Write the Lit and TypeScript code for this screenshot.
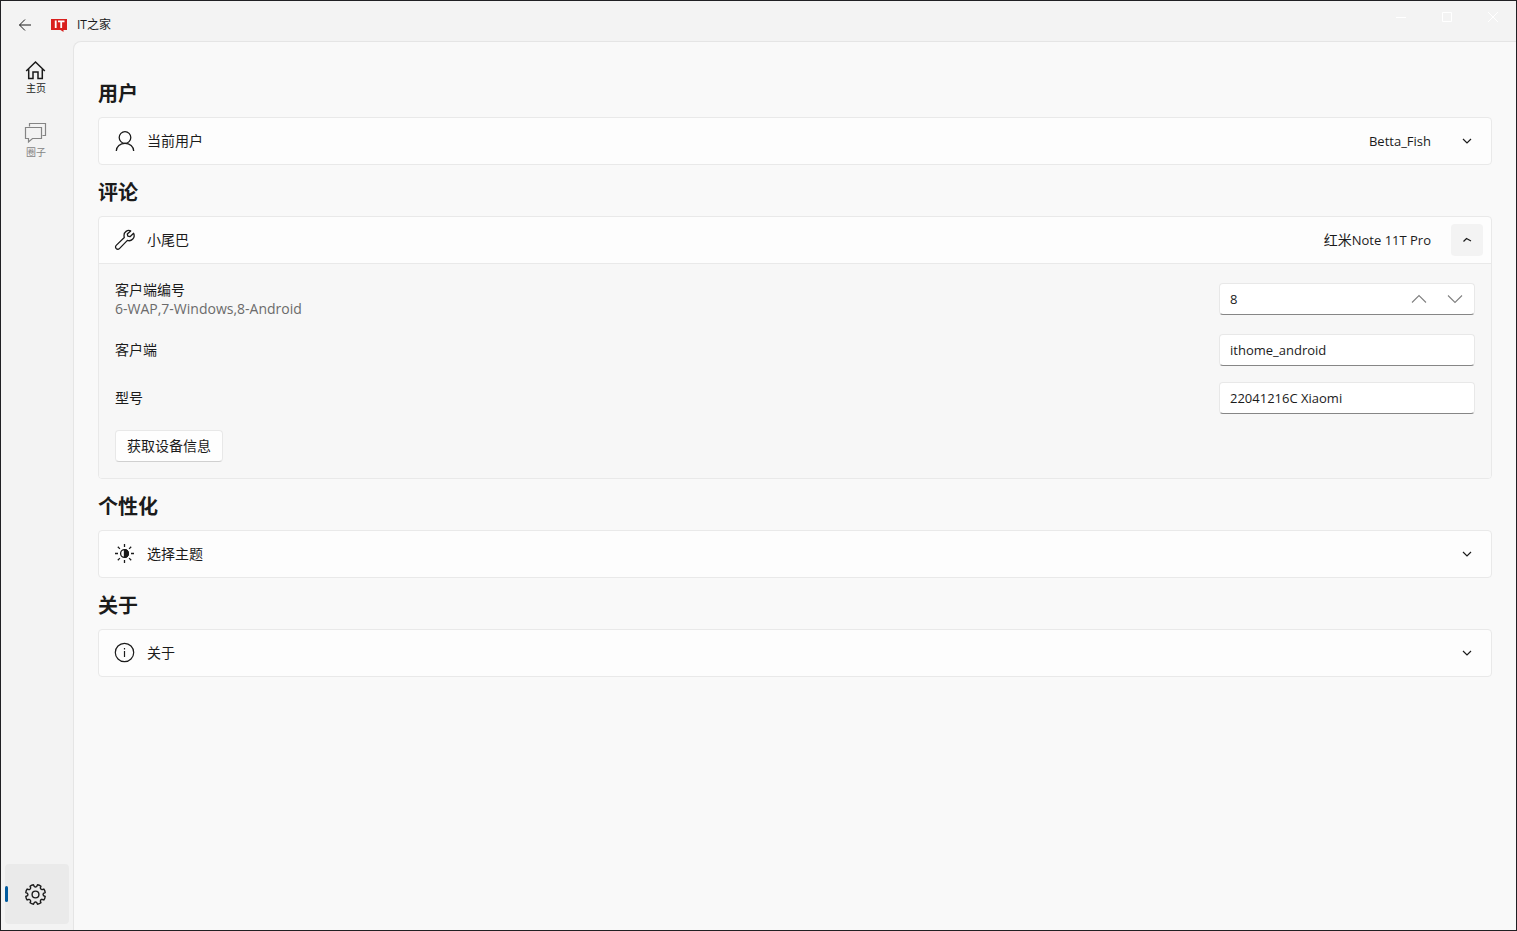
import { LitElement, html, css, svg, nothing, type TemplateResult } from "lit";
import { customElement, property } from "lit/decorators.js";

const icon = (size: number, body: TemplateResult, width = 1.2) => html`<svg
  width=${size}
  height=${size}
  viewBox="0 0 ${size} ${size}"
  fill="none"
  stroke="currentColor"
  stroke-width=${width}
  aria-hidden="true"
>
  ${body}
</svg>`;

const gearPath = (() => {
  const c = 11.5;
  const pts: string[] = [];
  for (let i = 0; i < 8; i++) {
    const a = (i * Math.PI) / 4 + Math.PI / 8;
    const at = (r: number, d: number) =>
      `${(c + r * Math.cos(a + d)).toFixed(2)} ${(c + 1 + r * Math.sin(a + d)).toFixed(2)}`;
    pts.push(`${i ? "L" : "M"}${at(8.1, -0.24)} L${at(9.9, -0.19)} Q${at(10.3, 0)} ${at(9.9, 0.19)} L${at(8.1, 0.24)}`);
    pts.push(`Q${at(7.1, 0.39)} ${at(8.1, 0.54)}`);
  }
  return pts.join(" ") + "Z";
})();

const icons = {
  back: icon(14, svg`<path d="M13 7H1.5M7 1.5 1.5 7 7 12.5" />`, 1),
  home: icon(22, svg`<path d="M1.200 12 10.500 3l9.300 9M3.700 10.200V19.500h4.300v-6.500h5v6.500h4.300V10.200" />`, 1.5),
  chat: icon(22, svg`<path d="M4.500 3.500V.500h16v12H17.500M.5 4.500h16v11H7.500L3.500 19v-3.500h-3z" />`, 1.2),
  gear: icon(24, svg`<path d=${gearPath} stroke-linejoin="round" /><circle cx="11.500" cy="12.500" r="3.400" />`, 1.4),
  user: icon(20, svg`<circle cx="10" cy="6.500" r="5.800" /><path d="M1.300 20a8.700 7.700 0 0 1 17.400 0" />`, 1.3),
  wrench: icon(20, svg`<path stroke-linejoin="round" d="M18.600 3.300 15 6.700l-2.200-.500-.500-2.200L15.700.900C12.500-.500 8.800 2 9 5.600c0 .700.100 1.300.300 1.900L1.200 15.400a2.200 2.200 0 0 0 3.200 3.200l8-8.200c4 1.400 8.300-2.600 6.200-7.100z" />`, 1.3),
  theme: icon(20, svg`<circle cx="9.500" cy="9.500" r="3.900" /><path d="M9.500 5.600a3.900 3.900 0 0 1 0 7.800z" fill="currentColor" /><path d="M9.500 0v3M9.500 16v3M0 9.500h3M16 9.500h3M2.800 2.800l2.100 2.100M14.100 14.100l2.100 2.100M2.800 16.200l2.100-2.100M14.100 4.900l2.100-2.100" />`, 1.3),
  info: icon(20, svg`<circle cx="9.500" cy="9.500" r="9.200" /><path d="M9.500 8v6M9.500 5v1.500" />`, 1.2),
  down: icon(10, svg`<path d="M1 3 5 7 9 3" />`, 1.2),
  up: icon(10, svg`<path d="M1.500 6.500 4.500 3.500 9 6" />`, 1.2),
  spinUp: icon(14, svg`<path d="M0 10.500 7 3.500 14 10.500" />`, 1.1),
  spinDown: icon(14, svg`<path d="M0 3.500 7 10.500 14 3.500" />`, 1.1),
  minimize: icon(10, svg`<path d="M0 5.500h10" />`, 1),
  maximize: icon(10, svg`<path d="M.5.500h9v9h-9z" />`, 1),
  close: icon(10, svg`<path d="M0 0l10 10M10 0 0 10" />`, 1),
  logo: html`<svg width="16" height="14" viewBox="0 0 16 14" aria-hidden="true">
    <path fill="#d9201e" d="M0 1h16v11h-3.500v2L9.500 12H0z" />
    <path stroke="#fff" stroke-width="1.800" d="M4.700 2.500v7.500M7 3.400h6.500M10.200 2.500v7.500" />
  </svg>`,
};

const shared = css`
  * {
    box-sizing: border-box;
  }
  button,
  input {
    font: inherit;
    color: inherit;
    margin: 0;
  }
  button {
    border: 0;
    padding: 0;
    background: none;
    display: flex;
    align-items: center;
    justify-content: center;
  }
  svg {
    display: block;
    flex: none;
    overflow: visible;
  }
`;

@customElement("setting-card")
export class SettingCard extends LitElement {
  @property() label = "";
  @property({ type: Boolean, reflect: true }) open = false;
  @property({ attribute: false }) glyph?: TemplateResult;

  static styles = [
    shared,
    css`
      :host {
        display: block;
        border: 1px solid #e9e9e9;
        border-radius: 4px;
        background: #fdfdfd;
        overflow: hidden;
      }
      .header {
        display: flex;
        align-items: center;
        height: 46px;
        padding: 0 8px 0 16px;
      }
      .label {
        flex: 1;
        margin-left: 12px;
        font-size: 14px;
      }
      .toggle {
        width: 32px;
        height: 32px;
        margin-left: 20px;
        border-radius: 4px;
      }
      :host([open]) .toggle {
        background: #f3f3f3;
      }
      .body {
        border-top: 1px solid #e9e9e9;
        background: #f7f7f7;
        padding: 8px 16px;
      }
    `,
  ];

  render() {
    return html`
      <div class="header">
        ${this.glyph}
        <span class="label">${this.label}</span>
        <slot name="value"></slot>
        <button
          class="toggle"
          aria-label=${this.label}
          aria-expanded=${this.open}
          @click=${() => (this.open = !this.open)}
        >
          ${this.open ? icons.up : icons.down}
        </button>
      </div>
      ${this.open ? html`<div class="body"><slot></slot></div>` : nothing}
    `;
  }
}

@customElement("app-root")
export class AppRoot extends LitElement {
  static styles = [
    shared,
    css`
      :host {
        display: flex;
        flex-direction: column;
        box-sizing: border-box;
        min-height: 100vh;
        border: 1px solid #202023;
        background: #f3f3f3;
        color: #1b1b1b;
        font-family: "Open Sans", "Noto Sans CJK SC", sans-serif;
        font-size: 14px;
        line-height: 20px;
      }
      .titlebar {
        display: flex;
        height: 40px;
      }
      .back {
        width: 14px;
        margin: 8px 19px 0 17px;
      }
      .brand {
        display: flex;
        align-items: center;
        gap: 10px;
        padding-top: 8px;
        font-size: 12px;
        flex: 1;
      }
      .caption {
        width: 46px;
        height: 32px;
        color: #fff;
      }
      .shell {
        display: flex;
        flex: 1;
      }
      .nav {
        display: flex;
        flex-direction: column;
        gap: 4px;
        width: 72px;
        padding: 4px 4px 6px;
      }
      .item {
        display: flex;
        flex-direction: column;
        align-items: center;
        height: 60px;
        padding: 14px 2px 0 0;
        border-radius: 4px;
        color: #1b1b1b;
        text-decoration: none;
        font-size: 10px;
        line-height: 14px;
      }
      .item.muted {
        color: #858585;
      }
      .item.selected {
        justify-content: center;
        position: relative;
        margin-top: auto;
        padding-top: 0;
        background: #eaeaea;
      }
      .item.selected::before {
        content: "";
        position: absolute;
        left: 0;
        top: 22px;
        width: 3px;
        height: 16px;
        border-radius: 2px;
        background: #005a9e;
      }
      .content {
        flex: 1;
        padding: 24px;
        border: solid #e5e5e5;
        border-width: 1px 0 0 1px;
        border-top-left-radius: 8px;
        background: #f9f9f9;
      }
      h2 {
        margin: 14px 0 10px;
        font-size: 20px;
        line-height: 27px;
        font-weight: 700;
      }
      .latin {
        font-size: 13px;
      }
      .row {
        display: flex;
        align-items: center;
        justify-content: space-between;
        padding: 8px 0;
        min-height: 48px;
      }
      .hint {
        display: block;
        font-size: 14px;
        line-height: 18px;
        color: #6b6b6b;
      }
      .field {
        display: flex;
        width: 256px;
        height: 32px;
        border: 1px solid #e8e8e8;
        border-bottom-color: #868686;
        border-radius: 4px;
        background: #fff;
        font-size: 13px;
      }
      .field input {
        flex: 1;
        min-width: 0;
        border: 0;
        outline: 0;
        padding: 0 10px;
        background: none;
      }
      .spin {
        width: 36px;
        color: #808080;
      }
      .spin:last-child {
        margin-right: 1px;
      }
      .action {
        height: 32px;
        padding: 0 11px;
        border: 1px solid #e8e8e8;
        border-bottom-color: #d0d0d0;
        border-radius: 4px;
        background: #fefefe;
      }
    `,
  ];

  render() {
    return html`
      <header class="titlebar">
        <button class="back" aria-label="返回">${icons.back}</button>
        <div class="brand">${icons.logo}<span>IT之家</span></div>
        <button class="caption" aria-label="最小化">${icons.minimize}</button>
        <button class="caption" aria-label="最大化">${icons.maximize}</button>
        <button class="caption" aria-label="关闭">${icons.close}</button>
      </header>
      <div class="shell">
        <nav class="nav">
          <a class="item" href="#home">${icons.home}主页</a>
          <a class="item muted" href="#circle">${icons.chat}圈子</a>
          <a class="item selected" href="#settings" aria-label="设置">${icons.gear}</a>
        </nav>
        <main class="content">
          <h2>用户</h2>
          <setting-card label="当前用户" .glyph=${icons.user}>
            <span slot="value" class="latin">Betta_Fish</span>
          </setting-card>

          <h2>评论</h2>
          <setting-card label="小尾巴" open .glyph=${icons.wrench}>
            <span slot="value">红米<span class="latin">Note 11T Pro</span></span>
            <div class="row">
              <label for="client-id">客户端编号<span class="hint">6-WAP,7-Windows,8-Android</span></label>
              <div class="field">
                <input id="client-id" inputmode="numeric" value="8" />
                <button class="spin" aria-label="增加">${icons.spinUp}</button>
                <button class="spin" aria-label="减少">${icons.spinDown}</button>
              </div>
            </div>
            <div class="row">
              <label for="client">客户端</label>
              <div class="field"><input id="client" value="ithome_android" /></div>
            </div>
            <div class="row">
              <label for="model">型号</label>
              <div class="field"><input id="model" value="22041216C Xiaomi" /></div>
            </div>
            <div class="row"><button class="action">获取设备信息</button></div>
          </setting-card>

          <h2>个性化</h2>
          <setting-card label="选择主题" .glyph=${icons.theme}></setting-card>

          <h2>关于</h2>
          <setting-card label="关于" .glyph=${icons.info}></setting-card>
        </main>
      </div>
    `;
  }
}
